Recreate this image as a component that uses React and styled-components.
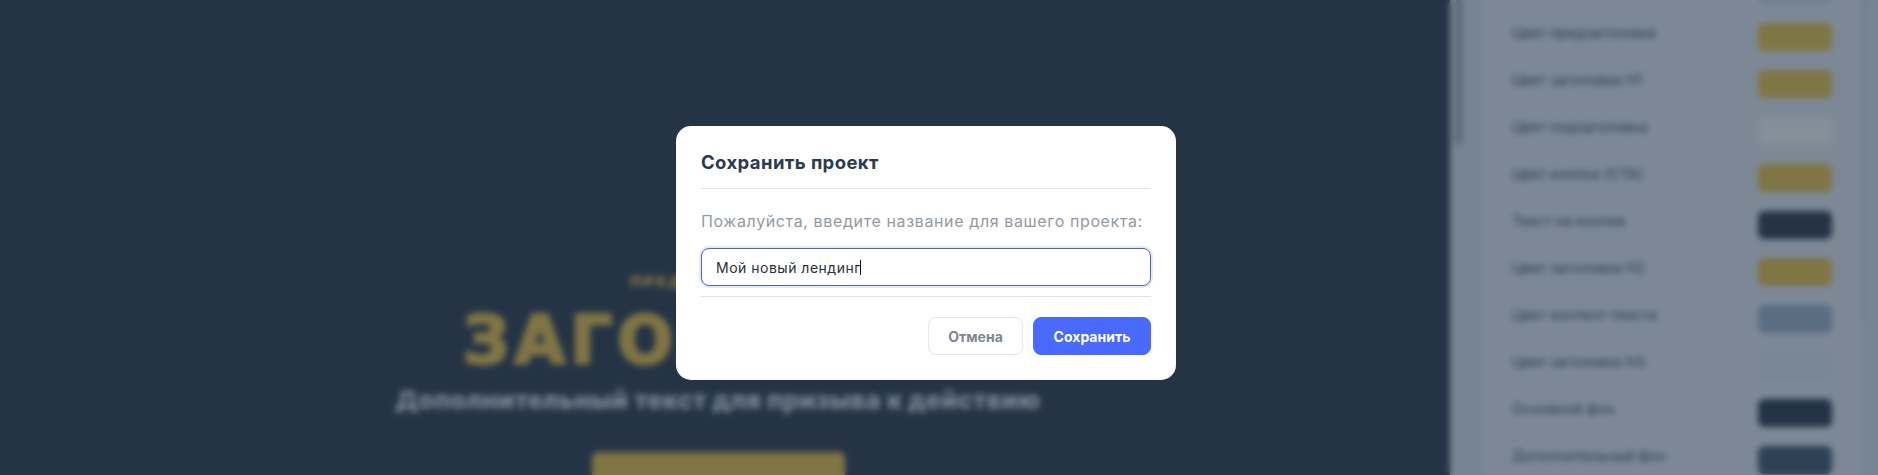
import React from 'react';
import styled, { createGlobalStyle } from 'styled-components';

const GlobalStyle = createGlobalStyle`
  html, body {
    margin: 0;
    height: 100%;
    overflow: hidden;
    background: #253445;
    font-family: "Inter", "Open Sans", "Liberation Sans", sans-serif;
  }
`;

const Page = styled.div`
  display: flex;
  width: 1878px;
  height: 475px;
  overflow: hidden;
`;

const Preview = styled.main`
  flex: 0 0 1450px;
  box-sizing: border-box;
  padding: 268px 14px 0 0;
  display: flex;
  flex-direction: column;
  align-items: center;
  background: #253445;
`;

const Pre = styled.div`
  font-size: 15px;
  line-height: 28px;
  font-weight: 900;
  letter-spacing: 2.6px;
  color: #dcb644;
`;

const Heading = styled.h1`
  margin: 9px 0 0;
  font-family: "DejaVu Sans", sans-serif;
  font-size: 65px;
  line-height: 72px;
  font-weight: 700;
  letter-spacing: 5.5px;
  -webkit-text-stroke: 3px #dcb644;
  color: #dcb644;
`;

const Sub = styled.p`
  margin: 7px 0 0;
  font-size: 25px;
  line-height: 32px;
  font-weight: 800;
  letter-spacing: 0.45px;
  color: #d4dde5;
`;

const Cta = styled.div`
  margin-top: 36px;
  width: 253px;
  height: 62px;
  box-sizing: border-box;
  padding-top: 20px;
  border-radius: 6px;
  background: #dcb644;
  text-align: center;
  font-size: 16px;
  line-height: 20px;
  font-weight: 700;
  letter-spacing: 1.2px;
  color: #253445;
`;

const Sidebar = styled.aside`
  flex: 1;
  display: flex;
  background: #cbd5de;
`;

const Thumb = styled.div`
  flex: 0 0 ${p => p.$w}px;
  height: ${p => p.$h}px;
  margin: ${p => p.$m};
  border-radius: 4px;
  background: ${p => p.$c};
`;

const Settings = styled.div`
  flex: 1;
  margin: -34px 0 0 22px;
  padding: 0 30px 0 27px;
  display: flex;
  flex-direction: column;
  background: #d4dde5;
  height: 560px;
`;

const Row = styled.div`
  flex: 0 0 47px;
  display: flex;
  align-items: center;
  justify-content: space-between;
`;

const RowLabel = styled.span`
  font-size: 14.5px;
  color: #3a4a5e;
  margin-top: -8px;
`;

const Swatch = styled.div`
  width: 74px;
  height: 28px;
  border-radius: 6px;
  background: ${p => p.$c};
`;

const Overlay = styled.div`
  position: fixed;
  inset: 0;
  padding: 126px 26px 0 0;
  box-sizing: border-box;
  display: flex;
  justify-content: center;
  align-items: flex-start;
  background: rgba(36, 51, 69, 0.5);
  backdrop-filter: blur(3px);
`;

const Modal = styled.div`
  width: 500px;
  box-sizing: border-box;
  padding: 0 25px 25px;
  border-radius: 15px;
  background: #fff;
`;

const Title = styled.h2`
  margin: 0;
  padding: 25px 0 15px;
  font-size: 18.5px;
  line-height: 22px;
  font-weight: 700;
  letter-spacing: 0.4px;
  color: #2c3a4e;
  border-bottom: 1px solid #e2e4e8;
`;

const Label = styled.label`
  display: block;
  margin-top: 22px;
  font-size: 16px;
  line-height: 20px;
  letter-spacing: 0.62px;
  color: #9399a3;
`;

const InputWrap = styled.div`
  position: relative;
  margin-top: 17px;
`;

const Input = styled.input`
  display: block;
  width: 100%;
  height: 38px;
  box-sizing: border-box;
  padding: 0 14px;
  border: 1px solid #5264c4;
  border-radius: 8px;
  outline: none;
  box-shadow: 0 0 0 2px #e4e9fb;
  background: #fff;
  font: 400 14px "Inter", sans-serif;
  letter-spacing: 0.5px;
  color: #2b2f36;
  caret-color: transparent;
`;

const Caret = styled.span`
  position: absolute;
  left: 159px;
  top: 12px;
  width: 1px;
  height: 15px;
  background: #111;
`;

const Footer = styled.div`
  margin-top: 10px;
  padding-top: 20px;
  border-top: 1px solid #e2e4e8;
  display: flex;
  justify-content: flex-end;
  gap: 10px;
`;

const Button = styled.button`
  width: ${p => p.$w}px;
  height: 38px;
  box-sizing: border-box;
  border-radius: 8px;
  border: 1px solid ${p => (p.$primary ? '#4a69ff' : '#e4e6ea')};
  background: ${p => (p.$primary ? '#4a69ff' : '#fff')};
  color: ${p => (p.$primary ? '#fff' : '#7d8693')};
  font: 700 14px "Inter", sans-serif;
  letter-spacing: 0;
`;

const rows = [
  ['', '#bac8d8'],
  ['Цвет предзаголовка', '#dcb644'],
  ['Цвет заголовка H1', '#dcb644'],
  ['Цвет подзаголовка', '#e4eaee'],
  ['Цвет кнопки (CTA)', '#dcb644'],
  ['Текст на кнопке', '#253445'],
  ['Цвет заголовка H2', '#dcb644'],
  ['Цвет контент-текста', '#90a7bd'],
  ['Цвет заголовка H3', '#cfd8e2'],
  ['Основной фон', '#253445'],
  ['Дополнительный фон', '#3a4e64'],
];

export default function App() {
  return (
    <>
      <GlobalStyle />
      <Page>
        <Preview>
          <Pre>ПРЕДЗАГОЛОВОК</Pre>
          <Heading>ЗАГОЛОВОК</Heading>
          <Sub>Дополнительный текст для призыва к действию</Sub>
          <Cta>ТЕКСТ КНОПКИ</Cta>
        </Preview>
        <Sidebar>
          <Thumb $w={8} $h={145} $m="0 0 0 5px" $c="#9aa2aa" />
          <Settings>
            {rows.map(([label, color]) => (
              <Row key={label || 'top'}>
                <RowLabel>{label}</RowLabel>
                <Swatch $c={color} />
              </Row>
            ))}
          </Settings>
          <Thumb $w={4} $h={323} $m="0 12px 0 0" $c="#bcc7d2" />
        </Sidebar>
      </Page>
      <Overlay>
        <Modal>
          <Title>Сохранить проект</Title>
          <Label htmlFor="project-name">Пожалуйста, введите название для вашего проекта:</Label>
          <InputWrap>
            <Input id="project-name" defaultValue="Мой новый лендинг" />
            <Caret />
          </InputWrap>
          <Footer>
            <Button $w={95}>Отмена</Button>
            <Button $w={118} $primary>Сохранить</Button>
          </Footer>
        </Modal>
      </Overlay>
    </>
  );
}
